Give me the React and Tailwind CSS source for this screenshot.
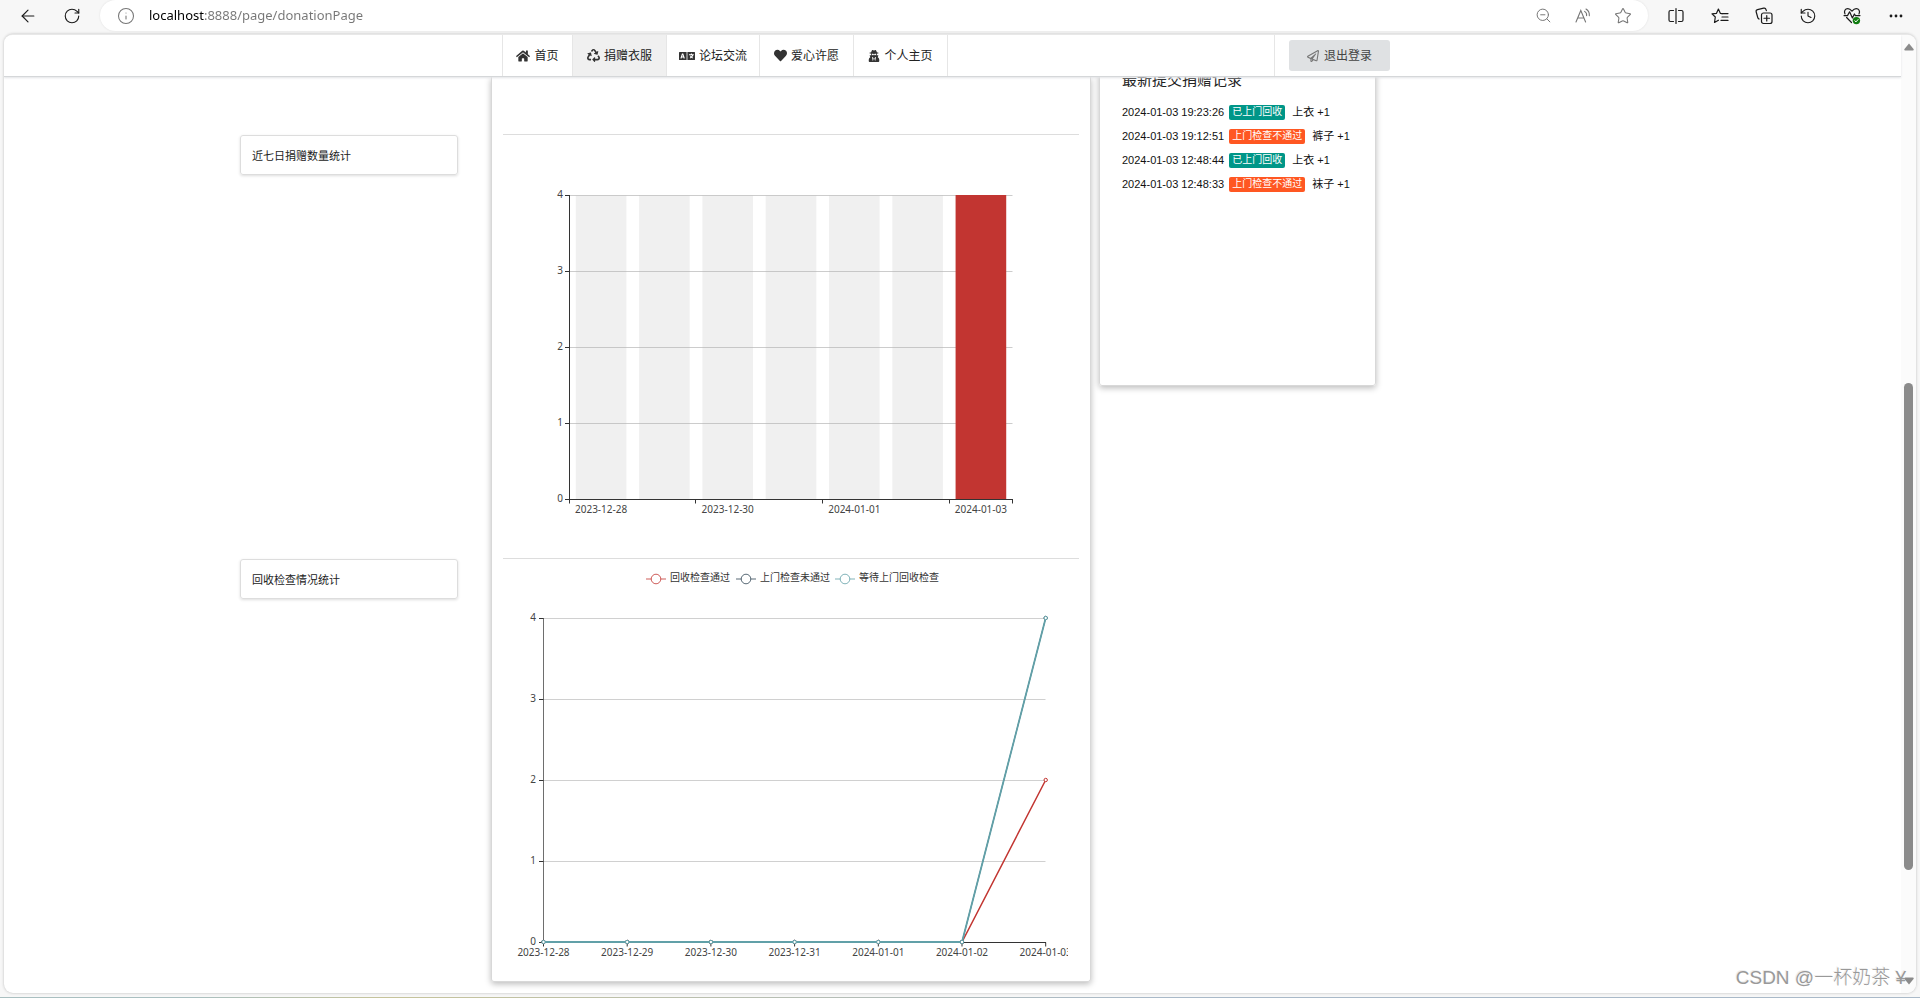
import React from "react";
import { ArrowLeft, Info, RotateCw, ZoomOut, Star, History } from "lucide-react";
import { FaHome, FaRecycle, FaLanguage, FaHeart, FaUserSecret, FaRegPaperPlane } from "react-icons/fa";

const DAYS = ["2023-12-28", "2023-12-29", "2023-12-30", "2023-12-31", "2024-01-01", "2024-01-02", "2024-01-03"];
const COUNTS = [0, 0, 0, 0, 0, 0, 4];

const SERIES = [
  { name: "回收检查通过", color: "#c23531", data: [0, 0, 0, 0, 0, 0, 2], legendX: 132, width: 1.5 },
  { name: "上门检查未通过", color: "#2f4554", data: [0, 0, 0, 0, 0, 0, 4], legendX: 222, width: 1 },
  { name: "等待上门回收检查", color: "#61a0a8", data: [0, 0, 0, 0, 0, 0, 4], legendX: 321, width: 1.8 },
];

const NAV = [
  { label: "首页", icon: FaHome, width: "w-[70px]", size: 14 },
  { label: "捐赠衣服", icon: FaRecycle, width: "w-[94px]", size: 13, active: true },
  { label: "论坛交流", icon: FaLanguage, width: "w-[93px]", size: 16 },
  { label: "爱心许愿", icon: FaHeart, width: "w-[94px]", size: 13 },
  { label: "个人主页", icon: FaUserSecret, width: "w-[94px]", size: 12 },
];

const RECORDS = [
  { time: "2024-01-03 19:23:26", status: "已上门回收", ok: true, item: "上衣 +1" },
  { time: "2024-01-03 19:12:51", status: "上门检查不通过", ok: false, item: "裤子 +1" },
  { time: "2024-01-03 12:48:44", status: "已上门回收", ok: true, item: "上衣 +1" },
  { time: "2024-01-03 12:48:33", status: "上门检查不通过", ok: false, item: "袜子 +1" },
];

function ReadAloudIcon() {
  return (
    <svg width="18" height="18" viewBox="0 0 18 18" fill="none" stroke="currentColor" strokeWidth="1.1" strokeLinecap="round">
      <path d="M2 15 L6.8 3.5 L11.6 15 M3.7 11 H9.9" />
      <path d="M10.6 4.4 a4.2 4.2 0 0 1 2 4.2 M12 2 a7 7 0 0 1 3.3 6.6" />
    </svg>
  );
}

function SplitIcon() {
  return (
    <svg width="18" height="18" viewBox="0 0 18 18" fill="none" stroke="currentColor" strokeWidth="1.2" strokeLinecap="round">
      <path d="M6.5 3.5 H3.5 a1.5 1.5 0 0 0 -1.5 1.5 V13 a1.5 1.5 0 0 0 1.5 1.5 H6.5 M11.5 3.5 H14.5 a1.5 1.5 0 0 1 1.5 1.5 V13 a1.5 1.5 0 0 1 -1.5 1.5 H11.5 M9 1.5 V16.5" />
    </svg>
  );
}

function FavoritesIcon() {
  return (
    <svg width="18" height="18" viewBox="0 0 18 18" fill="none" stroke="currentColor" strokeWidth="1.2" strokeLinecap="round" strokeLinejoin="round">
      <path d="M11 6.6 L9.4 6.4 L7.4 2 L5.4 6.4 L1 6.9 L4.3 10 L3.5 15.5 L7.4 13.2" />
      <path d="M11 6.6 H17 M11 10 H17 M10 13.4 H17" />
    </svg>
  );
}

function CollectionsIcon() {
  return (
    <svg width="18" height="18" viewBox="0 0 18 18" fill="none" stroke="currentColor" strokeWidth="1.2" strokeLinecap="round" strokeLinejoin="round">
      <rect x="6.5" y="6" width="10.5" height="10.5" rx="2" />
      <path d="M11.75 8.5 V14 M9 11.25 H14.5" />
      <path d="M4 12 L2.9 11 L1.2 5 a1.9 1.9 0 0 1 1.3 -2.3 L8.7 1.2 a1.9 1.9 0 0 1 2.3 1.3 L11.4 3.6" />
    </svg>
  );
}

function HealthIcon() {
  return (
    <svg width="18" height="18" viewBox="1 1 18 18" fill="none" stroke="currentColor" strokeWidth="1.2" strokeLinecap="round" strokeLinejoin="round">
      <path d="M3 8 C1.6 5 3.2 2.6 5.8 2.6 C7.8 2.6 9 4 10 5.2 C11 4 12.2 2.6 14.2 2.6 C16.8 2.6 18.4 5 17 8 M4.6 11.5 L9.5 16.5" />
      <path d="M2 9.6 H5.5 L7.6 5.8 L10.4 12 L12.4 8 L13.4 9.6 H18" />
      <circle cx="14.4" cy="14.6" r="3.7" fill="#107c10" stroke="none" />
      <path d="M12.8 14.8 L14 15.9 L16.1 13.5" stroke="#fff" strokeWidth="1" />
    </svg>
  );
}

function MoreIcon() {
  return (
    <svg width="18" height="18" viewBox="0 0 18 18" fill="currentColor">
      <circle cx="4" cy="9" r="1.4" />
      <circle cx="9" cy="9" r="1.4" />
      <circle cx="14" cy="9" r="1.4" />
    </svg>
  );
}

function BrowserBar() {
  return (
    <header className="flex h-[34px] shrink-0 items-start bg-[#f7f7f7] text-[#1b1b1b]">
      <div className="flex h-8 items-center gap-6 pl-[18px]">
        <button type="button" aria-label="Back" className="flex size-5 items-center justify-center">
          <ArrowLeft size={20} strokeWidth={1.4} />
        </button>
        <button type="button" aria-label="Refresh" className="flex size-5 items-center justify-center">
          <RotateCw size={18} strokeWidth={1.5} />
        </button>
      </div>
      <div className="ml-[18px] flex h-[31px] min-w-0 flex-1 items-center rounded-full bg-white pr-4 pl-[17px] text-[#767676] shadow-[0_0_2px_#dddddd]">
        <Info size={18} strokeWidth={1.4} />
        <input
          aria-label="Address"
          type="text"
          defaultValue="localhost:8888/page/donationPage"
          className="ml-[14px] min-w-0 flex-1 bg-[linear-gradient(to_right,#000000_56px,#767676_56px)] bg-clip-text text-[13px] text-transparent outline-none"
        />
        <div className="flex items-center gap-[22px]">
          <button type="button" aria-label="Zoom"><ZoomOut size={17} strokeWidth={1.4} /></button>
          <button type="button" aria-label="Read aloud"><ReadAloudIcon /></button>
          <button type="button" aria-label="Add to favorites"><Star size={18} strokeWidth={1.4} /></button>
        </div>
      </div>
      <div className="flex h-8 items-center gap-[26px] pr-[15px] pl-[19px]">
        <button type="button" aria-label="Split screen"><SplitIcon /></button>
        <button type="button" aria-label="Favorites"><FavoritesIcon /></button>
        <button type="button" aria-label="Collections"><CollectionsIcon /></button>
        <button type="button" aria-label="History"><History size={18} strokeWidth={1.5} /></button>
        <button type="button" aria-label="Browser essentials"><HealthIcon /></button>
        <button type="button" aria-label="Settings and more"><MoreIcon /></button>
      </div>
    </header>
  );
}

function SiteNav() {
  return (
    <nav className="relative z-10 grid h-[42px] shrink-0 grid-cols-[498fr_773fr_626fr] border-b border-[#d5d7d9] bg-white shadow-[0_1px_2px_#e2e4e6]">
      <div />
      <div className="flex border-x border-[#e6e6e6]">
        {NAV.map(({ label, icon: Icon, width, size, active }) => (
          <a
            key={label}
            href="#"
            className={`flex shrink-0 items-center justify-center gap-1 border-r border-[#e6e6e6] text-[12px] text-[#222222] ${width} ${active ? "bg-[#f0f0f0]" : ""}`}
          >
            <Icon size={size} className="text-[#333333]" />
            {label}
          </a>
        ))}
      </div>
      <div className="flex items-center pl-[14px]">
        <button type="button" className="flex h-[31px] w-[101px] items-center justify-center gap-[5px] rounded-[3px] bg-[#dfe1e3] text-[12px] text-[#444444]">
          <FaRegPaperPlane size={12} className="text-[#777777]" />
          退出登录
        </button>
      </div>
    </nav>
  );
}

const BAR_LEFT = 55.5;
const BAR_STEP = 63.3;

function BarChart() {
  return (
    <svg viewBox="0 0 554 423" className="block w-full" fontSize="10" fill="#444444" role="img" aria-label="近七日捐赠数量统计">
      {[1, 2, 3, 4].map((v) => (
        <line key={v} x1={BAR_LEFT} x2="498.5" y1={364.5 - v * 76} y2={364.5 - v * 76} stroke="#cccccc" />
      ))}
      {DAYS.map((day, i) => (
        <rect key={day} x={BAR_LEFT + 6.3 + i * BAR_STEP} y="60.5" width="50.6" height="304" fill="#b4b4b4" fillOpacity="0.2" />
      ))}
      {COUNTS.map((n, i) =>
        n > 0 ? (
          <rect key={i} x={BAR_LEFT + 6.3 + i * BAR_STEP} y={364 - n * 76} width="50.6" height={n * 76} fill="#c23531" />
        ) : null
      )}
      <g stroke="#333333" fill="none">
        <path d="M55.5 60 V368.5 M51 364.5 H499 M181.5 364.5 V368.5 M308.5 364.5 V368.5 M435.5 364.5 V368.5 M498.5 364.5 V368.5" />
        <path d="M51 60.5 H55.5 M51 136.5 H55.5 M51 212.5 H55.5 M51 288.5 H55.5" />
      </g>
      {[0, 1, 2, 3, 4].map((v) => (
        <text key={v} x="49" y={367 - v * 76} textAnchor="end">{v}</text>
      ))}
      {DAYS.map((day, i) =>
        i % 2 === 0 ? (
          <text key={day} x={BAR_LEFT + 31.6 + i * BAR_STEP} y="378" textAnchor="middle">{day}</text>
        ) : null
      )}
    </svg>
  );
}

const px = (i) => 29.5 + i * 83.7;
const py = (v) => 383 - v * 81;

function LineChart() {
  return (
    <svg viewBox="0 0 554 422" className="block w-full overflow-hidden" fontSize="10" fill="#444444" role="img" aria-label="回收检查情况统计">
      {SERIES.map((s) => (
        <g key={s.name}>
          <path d={`M${s.legendX} 20 h20`} stroke={s.color} strokeOpacity="0.8" />
          <circle cx={s.legendX + 10} cy="20" r="4.8" fill="#ffffff" stroke={s.color} strokeOpacity="0.8" />
          <text x={s.legendX + 24} y="22" fill="#333333">{s.name}</text>
        </g>
      ))}
      {[1, 2, 3, 4].map((v) => (
        <line key={v} x1="29.5" x2="531.5" y1={383.5 - v * 81} y2={383.5 - v * 81} stroke="#d0d0d0" />
      ))}
      <g stroke="#333333" fill="none">
        <path d="M29.5 59 V383.5" stroke="#6e6e6e" />
        <path d="M25 383.5 H532" />
        {[1, 2, 3, 4].map((v) => (
          <path key={v} d={`M25 ${383.5 - v * 81} H29.5`} />
        ))}
        {DAYS.map((day, i) => (
          <path key={day} d={`M${px(i)} 383.5 V387.5`} />
        ))}
      </g>
      {SERIES.map((s) => (
        <g key={s.name} stroke={s.color}>
          <polyline fill="none" strokeWidth={s.width} points={s.data.map((v, i) => `${px(i)},${py(v)}`).join(" ")} />
          {s.data.map((v, i) => (
            <circle key={i} cx={px(i)} cy={py(v)} r="1.7" fill="#ffffff" strokeWidth="1" />
          ))}
        </g>
      ))}
      {[0, 1, 2, 3, 4].map((v) => (
        <text key={v} x="22" y={386 - v * 81} textAnchor="end">{v}</text>
      ))}
      {DAYS.map((day, i) => (
        <text key={day} x={px(i)} y="397" textAnchor="middle">{day}</text>
      ))}
    </svg>
  );
}

function LabelCard({ children }) {
  return (
    <div className="flex h-10 items-center rounded-[3px] border border-[#dddddd] px-[11px] pt-[2px] text-[11px] text-[#222222] shadow-[0_1px_3px_#dddddd]">
      {children}
    </div>
  );
}

function Content() {
  return (
    <main className="grid min-h-0 flex-1 grid-cols-[236fr_218fr_33fr_600fr_8fr_277fr_525fr] items-start overflow-hidden">
      <div />
      <div className="flex flex-col gap-[384px] pt-[58px]">
        <LabelCard>近七日捐赠数量统计</LabelCard>
        <LabelCard>回收检查情况统计</LabelCard>
      </div>
      <div />
      <div className="rounded-b-[3px] border border-t-0 border-[#d8d8d8] px-[11px] pt-[57px] shadow-[0_2px_6px_#bbbbbb]">
        <section className="border-t border-[#dddddd] px-[11px]">
          <BarChart />
        </section>
        <section className="border-t border-[#dddddd] px-[11px]">
          <LineChart />
        </section>
      </div>
      <div />
      <aside className="-mt-[10px] h-[319px] rounded-b-[3px] border border-[#d8d8d8] px-[22px] shadow-[0_2px_6px_#bbbbbb]">
        <h2 className="text-[15px] leading-[22px] whitespace-nowrap text-[#222222]">最新提交捐赠记录</h2>
        <ul className="mt-[10px] text-[11px] leading-6 whitespace-nowrap text-[#111111]">
          {RECORDS.map((r) => (
            <li key={r.time} className="flex h-6 items-center font-['Liberation_Sans','Noto_Sans_CJK_SC',sans-serif]">
              {r.time}
              <span className={`ml-[5px] flex h-[15px] items-center rounded-[2px] px-[3px] text-[10px] text-white ${r.ok ? "bg-[#009688]" : "bg-[#ff5722]"}`}>
                {r.status}
              </span>
              <span className="ml-[7px]">{r.item}</span>
            </li>
          ))}
        </ul>
      </aside>
      <div />
    </main>
  );
}

function ScrollBar() {
  return (
    <div className="flex w-[15px] shrink-0 flex-col items-center bg-[#fbfbfb] py-2 text-[#8b8b8b]">
      <svg width="10" height="8" viewBox="0 0 10 8" fill="currentColor">
        <path d="M5 0.5 L9.5 6 a1 1 0 0 1 -0.8 1.5 H1.3 a1 1 0 0 1 -0.8 -1.5 Z" />
      </svg>
      <div className="flex w-full flex-1 flex-col items-center">
        <div className="grow-[332]" />
        <div className="w-[9px] grow-[488] rounded-full bg-[#8b8b8b]" />
        <div className="grow-[107]" />
      </div>
      <svg width="10" height="8" viewBox="0 0 10 8" fill="currentColor">
        <path d="M5 7.5 L0.5 2 a1 1 0 0 1 0.8 -1.5 H8.7 a1 1 0 0 1 0.8 1.5 Z" />
      </svg>
    </div>
  );
}

export default function App() {
  return (
    <div className="relative flex h-screen flex-col overflow-hidden bg-[#f7f7f7] font-['Noto_Sans','Noto_Sans_CJK_SC',sans-serif]">
      <BrowserBar />
      <div className="mx-1 flex min-h-0 flex-1 overflow-hidden rounded-[9px] border-t border-[#e8e8e8] bg-white shadow-[0_0_3px_#bbbbbb]">
        <div className="flex min-w-0 flex-1 flex-col">
          <SiteNav />
          <Content />
        </div>
        <ScrollBar />
      </div>
      <div className="mt-1 h-px shrink-0 bg-linear-to-r from-[#a9bfc0] from-10% via-[#c6c39a] via-20% to-[#a9b9c8] to-60%" />
      <div className="absolute right-[14px] bottom-[8px] font-['Liberation_Sans','Noto_Sans_CJK_SC',sans-serif] text-[19px] leading-6 font-light whitespace-nowrap text-[#999999] [text-shadow:-1px_-1px_0_#eeeeee]">
        CSDN @一杯奶茶 ¥
      </div>
    </div>
  );
}
